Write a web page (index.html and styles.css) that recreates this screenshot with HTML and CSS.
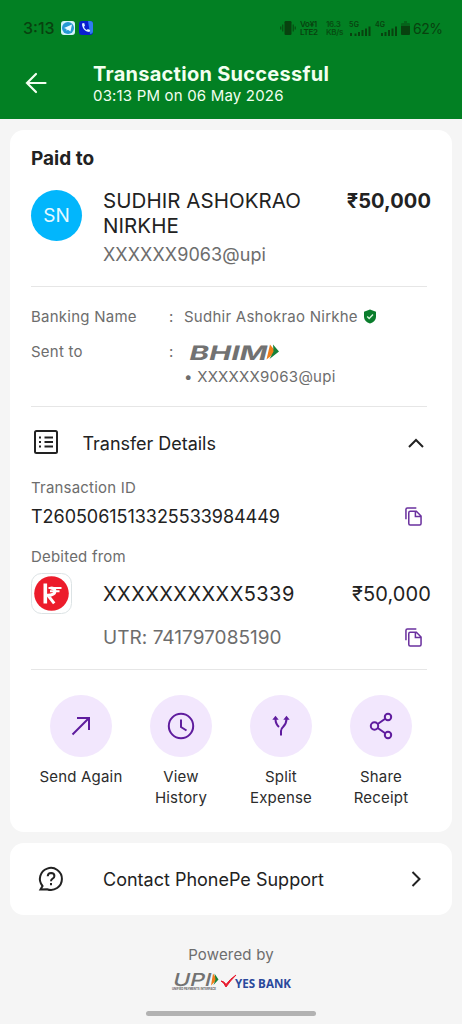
FILE: index.html
```html
<!DOCTYPE html>
<html lang="en">
<head>
<meta charset="utf-8">
<title>Transaction Successful</title>
<link rel="stylesheet" href="styles.css">
</head>
<body>
<header class="top">
  <div class="status">
    <span class="clock">3:13</span>
    <svg class="app" width="14" height="14" viewBox="0 0 14 14"><rect width="14" height="14" rx="3" fill="#d5f3fa"/><circle cx="7" cy="7" r="6" fill="#2599d3"/><path d="M3 7l8-3.400-1.500 7-2.600-1.900L5.500 9.800V8z" fill="#e8faff"/></svg>
    <svg class="app app-call" width="14" height="14" viewBox="0 0 14 14"><rect width="14" height="14" rx="3" fill="#0a1fd0"/><path d="M9 0h2a3 3 0 0 1 3 3v7a3 3 0 0 1-3 3z" fill="#2f7cf0"/><path d="M3 2.500c0 5 3 8 7.500 8.500l.6-2-2.300-1-1 1C6 8 5.300 7 5 5.800l1-1L5.200 2z" fill="#dff4ff"/></svg>
    <span class="grow"></span>
    <svg class="vibrate" width="16" height="14" viewBox="0 0 16 14"><rect x="4.500" y="0" width="7" height="14" rx="1.200"/><path d="M2.800 3.500v7M.8 5.500v3M13.200 3.500v7M15.200 5.500v3" stroke="#08420f" stroke-width="1"/></svg>
    <span class="tiny volte">Vo¥1<br>LTE2</span>
    <span class="tiny speed">16.3<br>KB/s</span>
    <svg class="signal" width="23" height="16" viewBox="0 -2 23 16"><text x="0" y="5" textLength="10">5G</text><path d="M1 11h2v3H1zM5.500 11.500h2V14h-2zM9 10h2v4H9zM12.500 8h2v6h-2zM16 6.500h2V14h-2zM19.500 4.500h2V14h-2z"/></svg>
    <svg class="signal signal-b" width="23" height="16" viewBox="0 -2 23 16"><text x="0" y="5" textLength="10">4G</text><path d="M6 11h2v3H6zM9.500 10h2v4h-2zM13 8h2v6h-2zM16.500 6.500h2V14h-2zM20 4.500h2V14h-2z"/></svg>
    <svg class="battery" width="9" height="14" viewBox="0 0 9 14"><path d="M3 0h3v2h2q1 0 1 1v2H0V3q0-1 1-1h2z" opacity=".45"/><path d="M0 5h9v8q0 1-1 1H1q-1 0-1-1z"/></svg>
    <span class="percent">62%</span>
  </div>
  <div class="heading">
    <svg class="back" width="22" height="22" viewBox="0 0 22 22"><path d="M20.500 11H2M11 2L2 11l9 9"/></svg>
    <div>
      <h1>Transaction Successful</h1>
      <p class="when">03:13 PM on 06 May 2026</p>
    </div>
  </div>
</header>

<main>
  <section class="card receipt">
    <h2>Paid to</h2>
    <div class="payee">
      <div class="avatar">SN</div>
      <div class="who">
        <div class="name">SUDHIR ASHOKRAO<br>NIRKHE</div>
        <div class="vpa">XXXXXX9063@upi</div>
      </div>
      <div class="amount">₹50,000</div>
    </div>
    <hr>
    <dl class="bank">
      <dt>Banking Name</dt><dd class="colon">:</dd>
      <dd class="holder">Sudhir Ashokrao Nirkhe<svg width="14" height="15" viewBox="0 0 14 15"><path d="M7 .5l6 2.300v4.700c0 3.500-2.500 6-6 7-3.500-1-6-3.500-6-7V2.800z" fill="#0a7d2c"/><path d="M4.200 7.500l2 2 3.800-3.900" fill="none" stroke="#d8f5dc" stroke-width="1.400"/></svg></dd>
      <dt>Sent to</dt><dd class="colon">:</dd>
      <dd class="via">
        <svg class="bhim" width="100" height="30" viewBox="-4 -6 100 30"><g transform="translate(0 16.500) skewX(-14)"><text class="logo-text bhim-text" textLength="78" lengthAdjust="spacingAndGlyphs">BHIM</text></g><path d="M82 1.500l6 7.500-9.500 7.500z" fill="#ef7d1a"/><path d="M85 1.500l6 7L81.500 16l4-7.500z" fill="#168239"/></svg>
        <div>• XXXXXX9063@upi</div>
      </dd>
    </dl>
    <hr>
    <div class="details-head">
      <svg class="list" width="24" height="24" viewBox="0 0 24 24"><rect x="1" y="1" width="22" height="22" rx="1.500"/><path d="M5 7.500h2M5 12h2M5 16.500h2M10.500 7.500H19M10.500 12H19M10.500 16.500H19"/></svg>
      <h3>Transfer Details</h3>
      <svg class="chev" width="16" height="10" viewBox="0 0 16 10"><path d="M1 9l7-7 7 7"/></svg>
    </div>
    <div class="label l-id">Transaction ID</div>
    <div class="row id-row"><span>T2605061513325533984449</span>
      <svg class="copy" width="17" height="19" viewBox="0 0 18 20"><path d="M1 13V2.500Q1 1 2.500 1H12M5.500 4.500h6.500l5 5v8q0 1.500-1.500 1.500h-10Q4 19 4 17.500V6q0-1.500 1.500-1.500zM11 5v5h5.500"/></svg></div>
    <div class="label l-debit">Debited from</div>
    <div class="account">
      <svg class="kotak" width="42" height="42" viewBox="0 0 42 42"><rect x=".5" y=".5" width="40" height="40" rx="10" fill="#fff" stroke="#dce3e5"/><circle cx="20.500" cy="20.500" r="17.300" fill="#ec1c2b"/><path d="M14.300 10.500V30.500" stroke="#fff" stroke-width="3.600"/><path d="M17.500 15H30.500M19 18.300H28.500" stroke="#fff" stroke-width="1.900"/><path d="M19.500 15q4.500 0 4.500 3.300-.3 3.700-7 4l6.200 8" stroke="#fff" stroke-width="3"/></svg>
      <span class="num">XXXXXXXXXX5339</span>
      <span class="debit">₹50,000</span>
    </div>
    <div class="row utr"><span>UTR: 741797085190</span>
      <svg class="copy" width="17" height="19" viewBox="0 0 18 20"><path d="M1 13V2.500Q1 1 2.500 1H12M5.500 4.500h6.500l5 5v8q0 1.500-1.500 1.500h-10Q4 19 4 17.500V6q0-1.500 1.500-1.500zM11 5v5h5.500"/></svg></div>
    <hr>
    <div class="actions">
      <div class="action"><div class="disc"><svg width="32" height="32" viewBox="0 0 32 32"><path d="M7.500 24.500L24 8M12 8h12v12"/></svg></div>Send Again</div>
      <div class="action"><div class="disc"><svg width="32" height="32" viewBox="0 0 32 32"><circle cx="16" cy="16" r="12.200"/><path d="M16 9.500V17l5.500 3.500"/></svg></div>View<br>History</div>
      <div class="action"><div class="disc"><svg width="32" height="32" viewBox="0 0 32 32"><path d="M10.500 9q0 5 3.500 8M21.500 9c0 4.500-1.500 6-3.500 8q-2 1.800-2 4v4.500"/><path class="solid" d="M10.500 5.800l3.200 4H7.300zM21.500 5.800l3.200 4h-6.400z"/></svg></div>Split<br>Expense</div>
      <div class="action"><div class="disc"><svg width="32" height="32" viewBox="0 0 32 32"><circle cx="9.500" cy="16" r="3.700"/><circle cx="23" cy="7" r="3.200"/><circle cx="23" cy="25" r="3.200"/><path d="M12.700 14l7.500-5.200M12.700 18l7.500 5.200"/></svg></div>Share<br>Receipt</div>
    </div>
  </section>

  <section class="card support">
    <svg width="26" height="26" viewBox="0 0 26 26"><path d="M2.500 23.500L4.500 20A11 11 0 1 1 9 23.200z"/><path d="M9.700 10.300q.2-3.300 3.400-3.300 3.300.1 3.300 3 0 1.700-1.800 2.700-1.600.8-1.600 2.600M13 17v2.200"/></svg>
    <span>Contact PhonePe Support</span>
    <svg class="next" width="10" height="16" viewBox="0 0 10 16"><path d="M1.500 1l7 7-7 7"/></svg>
  </section>
</main>

<footer>
  <div class="powered">Powered by</div>
  <div class="logos">
    <svg class="upi" width="56" height="30" viewBox="-4 -6 56 30"><g transform="translate(0 12.500) skewX(-14)"><text class="logo-text upi-text" textLength="38" lengthAdjust="spacingAndGlyphs">UPI</text></g><path d="M41 .5l4 6-6 6z" fill="#ef7d1a"/><path d="M42.500 .5l4 6-5 5.500 2-5.500z" fill="#168239"/><text x="0" y="17" class="upi-sub" textLength="44" lengthAdjust="spacingAndGlyphs">UNIFIED PAYMENTS INTERFACE</text></svg>
    <svg class="yesbank" width="72" height="20" viewBox="0 0 72 20"><path d="M1 8q3 0 5 3.500Q10 6 16 2 10 8 6 14 4 9.500 1 8z" fill="#e8192c" stroke="#e8192c"/><text x="15" y="14.500" class="yes" textLength="56" lengthAdjust="spacingAndGlyphs">YES BANK</text></svg>
  </div>
  <div class="homebar"></div>
</footer>
</body>
</html>
```

FILE: styles.css
```css
* { box-sizing: border-box; margin: 0; padding: 0; }
body { width: 462px; height: 1024px; overflow: hidden; background: #f5f5f5; color: #222; font-family: Inter, "Noto Sans", sans-serif; }
svg { display: block; flex: none; fill: none; overflow: visible; }

.top { height: 119px; background: #028023; color: #f2fff0; }
.status { display: flex; align-items: center; height: 56px; padding: 0 23px; color: #08420f; }
.clock { width: 38px; font-size: 16px; font-weight: 500; }
.app-call { margin-left: 4px; }
.grow { flex: 1; }
.vibrate, .signal, .battery { fill: #08420f; }
.tiny { font-size: 8px; line-height: 8.500px; font-weight: 600; white-space: nowrap; }
.volte { width: 20px; margin-left: 4px; letter-spacing: -0.3px; }
.speed { width: 18px; margin-left: 6px; letter-spacing: -0.3px; opacity: .8; }
.signal { margin-left: 5px; font-size: 7px; font-weight: 600; }
.signal-b { margin-left: 3px; }
.battery { margin-left: 3px; }
.percent { margin-left: 3px; width: 26px; font-size: 14px; letter-spacing: -0.5px; white-space: nowrap; }
.heading { display: flex; padding: 6px 0 0 25px; }
.back { width: 22px; height: 22px; margin: 10px 46px 0 0; stroke: #f2fff0; stroke-width: 2.200; stroke-linecap: round; }
h1 { font-size: 20px; line-height: 24px; font-weight: 700; letter-spacing: 0.27px; }
.when { font-size: 15px; line-height: 20px; letter-spacing: 0.18px; }

main { padding: 11px 10px 0; }
.card { background: #fff; border-radius: 14px; }
.receipt { height: 702px; padding: 17px 21px 0; }
h2 { font-size: 19px; line-height: 24px; font-weight: 700; }
.payee { display: flex; margin-top: 18px; height: 97px; }
.avatar { width: 51px; height: 51px; margin-top: 1px; border-radius: 50%; background: #02b6fc; color: #e6f9ff; font-size: 19px; line-height: 51px; text-align: center; }
.who { margin: -1px 0 0 21px; flex: 1; white-space: nowrap; }
.name { font-size: 20.500px; line-height: 25px; letter-spacing: 0.06px; }
.vpa { margin-top: 5px; font-size: 18px; line-height: 24px; color: #6d6d6d; letter-spacing: 0.08px; }
.amount { font-size: 20px; line-height: 25px; font-weight: 700; letter-spacing: 0.1px; }
hr { height: 1px; border: 0; background: #e6e6e6; margin-right: 4px; }

.bank { display: grid; grid-template-columns: 138px 15px 1fr; height: 119px; padding-top: 19px; grid-template-rows: 35px 1fr; font-size: 15px; line-height: 22px; color: #6d6d6d; letter-spacing: 0.25px; }
.holder { display: flex; align-items: flex-start; white-space: nowrap; }
.holder svg { margin: 3px 0 0 5px; }
.bhim { margin: -4px 0 -1px 0; }
.logo-text { fill: #727272; font-family: Inter, sans-serif; font-weight: 700; letter-spacing: 0; }
.bhim-text { font-size: 20px; }

.details-head { display: flex; align-items: center; height: 24px; margin-top: 24px; padding: 0 7px 0 3px; }
.details-head svg { stroke: #222; stroke-width: 2; }
.list { margin-top: -2px; }
h3 { flex: 1; margin-left: 24.500px; padding-top: 1px; font-size: 18px; line-height: 24px; font-weight: 400; letter-spacing: -0.03px; }
.label { font-size: 15px; line-height: 20px; color: #6d6d6d; letter-spacing: 0.2px; }
.l-id { margin-top: 23px; }
.row { display: flex; align-items: center; justify-content: space-between; }
.id-row { height: 24px; margin-top: 6px; padding-right: 9px; font-size: 18px; letter-spacing: -0.04px; }
.copy { stroke: #6a309e; stroke-width: 1.600; }
.l-debit { margin-top: 19px; }
.account { display: flex; align-items: center; height: 42px; margin-top: 6px; font-size: 20px; }
.num { flex: 1; margin-left: 30px; letter-spacing: 0.43px; }
.debit { letter-spacing: 0.1px; }
.utr { height: 24px; margin-top: 10px; padding: 0 9px 0 72px; font-size: 19px; color: #6d6d6d; letter-spacing: 0.04px; }
.utr + hr { margin-top: 20px; }

.actions { display: grid; grid-template-columns: repeat(4, 100px); margin-top: 25px; }
.action { text-align: center; font-size: 15px; line-height: 21px; color: #2c2c2c; letter-spacing: 0.18px; }
.disc { width: 62px; height: 62px; margin: 0 auto 9px; border-radius: 50%; background: #f2e7fd; display: grid; place-items: center; }
.disc svg { stroke: #5f1c9e; stroke-width: 2; }
.disc .solid { fill: #5f1c9e; stroke: none; }

.support { display: flex; align-items: center; height: 72px; margin-top: 11px; padding: 0 31px 0 28px; font-size: 18px; }
.support > span { flex: 1; margin-left: 39px; }
.support svg, .chev { stroke: #222; stroke-width: 2; }

footer { display: flex; flex-direction: column; align-items: center; padding-top: 30px; }
.powered { font-size: 15px; line-height: 20px; color: #6d6d6d; letter-spacing: 0.18px; }
.logos { display: flex; width: 119px; margin-top: 8px; height: 18px; }
.upi { margin: -6px -4px 0; }
.upi-text { font-size: 18px; font-weight: 500; }
.upi-sub { fill: #666; font: 700 3.500px Inter, sans-serif; }
.yes { fill: #29489c; font: 700 12px "Open Sans", sans-serif; }
.homebar { width: 170px; height: 5px; margin-top: 20px; border-radius: 3px; background: #b2b2b2; }
```
